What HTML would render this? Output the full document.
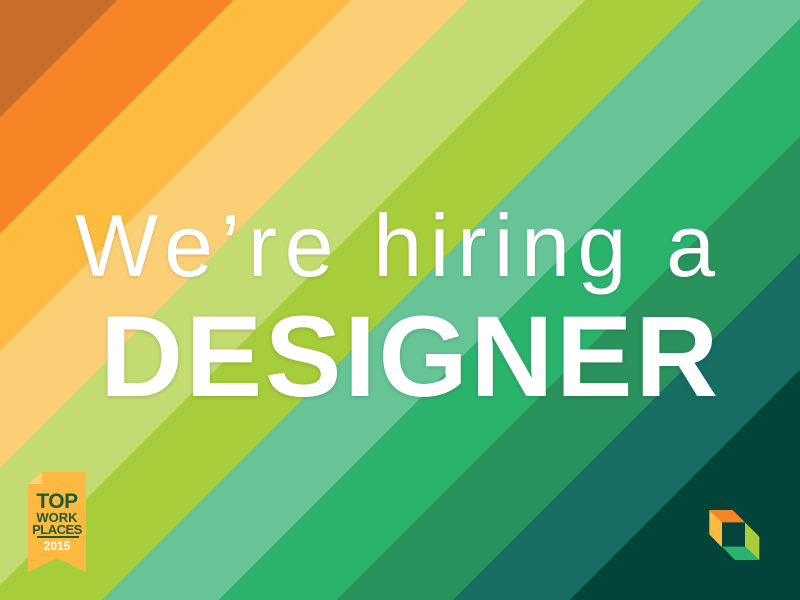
<!DOCTYPE html>
<html><head><meta charset="utf-8"><style>
html,body{margin:0;padding:0}
body{width:800px;height:600px;overflow:hidden;position:relative;font-family:"Liberation Sans",sans-serif;
background:linear-gradient(135deg,
#c86e2c 0%,#c86e2c 8.36%,
#f68526 8.36%,#f68526 16.71%,
#fdbb3f 16.71%,#fdbb3f 25.07%,
#fbcf76 25.07%,#fbcf76 33.43%,
#c2dc72 33.43%,#c2dc72 41.79%,
#a7cd3a 41.79%,#a7cd3a 50.14%,
#66c497 50.14%,#66c497 58.5%,
#2bb36e 58.5%,#2bb36e 66.86%,
#2a925d 66.86%,#2a925d 75.21%,
#166e62 75.21%,#166e62 83.57%,
#03443a 83.57%,#03443a 100%);}
.t1{position:absolute;left:75px;top:196px;font-size:88px;line-height:100px;color:#fff;letter-spacing:7.6px;white-space:nowrap;text-shadow:0 1px 3px rgba(0,0,0,.15)}
.t2{position:absolute;left:100px;top:297px;font-size:115px;line-height:120px;font-weight:bold;color:#fff;letter-spacing:2.5px;white-space:nowrap;text-shadow:0 1px 4px rgba(0,0,0,.18)}
.badge{position:absolute;left:28px;top:470px;width:58px;height:104px}
.bt{position:absolute;left:28px;width:58px;text-align:center;font-weight:bold;line-height:1}
</style></head><body>
<div class="t1">We’re hiring a</div>
<div class="t2">DESIGNER</div>
<svg class="badge" viewBox="0 0 58 104"><polygon points="0,14 14,2 58,2 58,102 29,88 0,102" fill="#fdb940"/><polygon points="0,14 14,2 14,14" fill="#fcd27a"/></svg>
<div class="bt" style="top:491px;font-size:21px;color:#1d5a37;letter-spacing:-0.5px">TOP</div>
<div class="bt" style="top:511px;font-size:13px;color:#1d5a37">WORK</div>
<div class="bt" style="top:523px;font-size:13px;color:#1d5a37;letter-spacing:-0.5px">PLACES</div>
<div style="position:absolute;left:37px;top:536px;width:42px;height:1.5px;background:#1d5a37"></div>
<div class="bt" style="top:540px;font-size:12px;color:#fff">2015</div>
<svg style="position:absolute;left:690px;top:490px" width="90" height="90" viewBox="0 0 270 270">
<polygon points="58,60 128,60 165,97 96,97" fill="#f68526"/>
<polygon points="58,60 96,97 96,172 58,133" fill="#fdbb3f"/>
<polygon points="165,97 208,140 208,210 165,170" fill="#a7cd3a"/>
<polygon points="96,170 165,170 208,210 135,210" fill="#2bb36e"/>
</svg>
</body></html>
